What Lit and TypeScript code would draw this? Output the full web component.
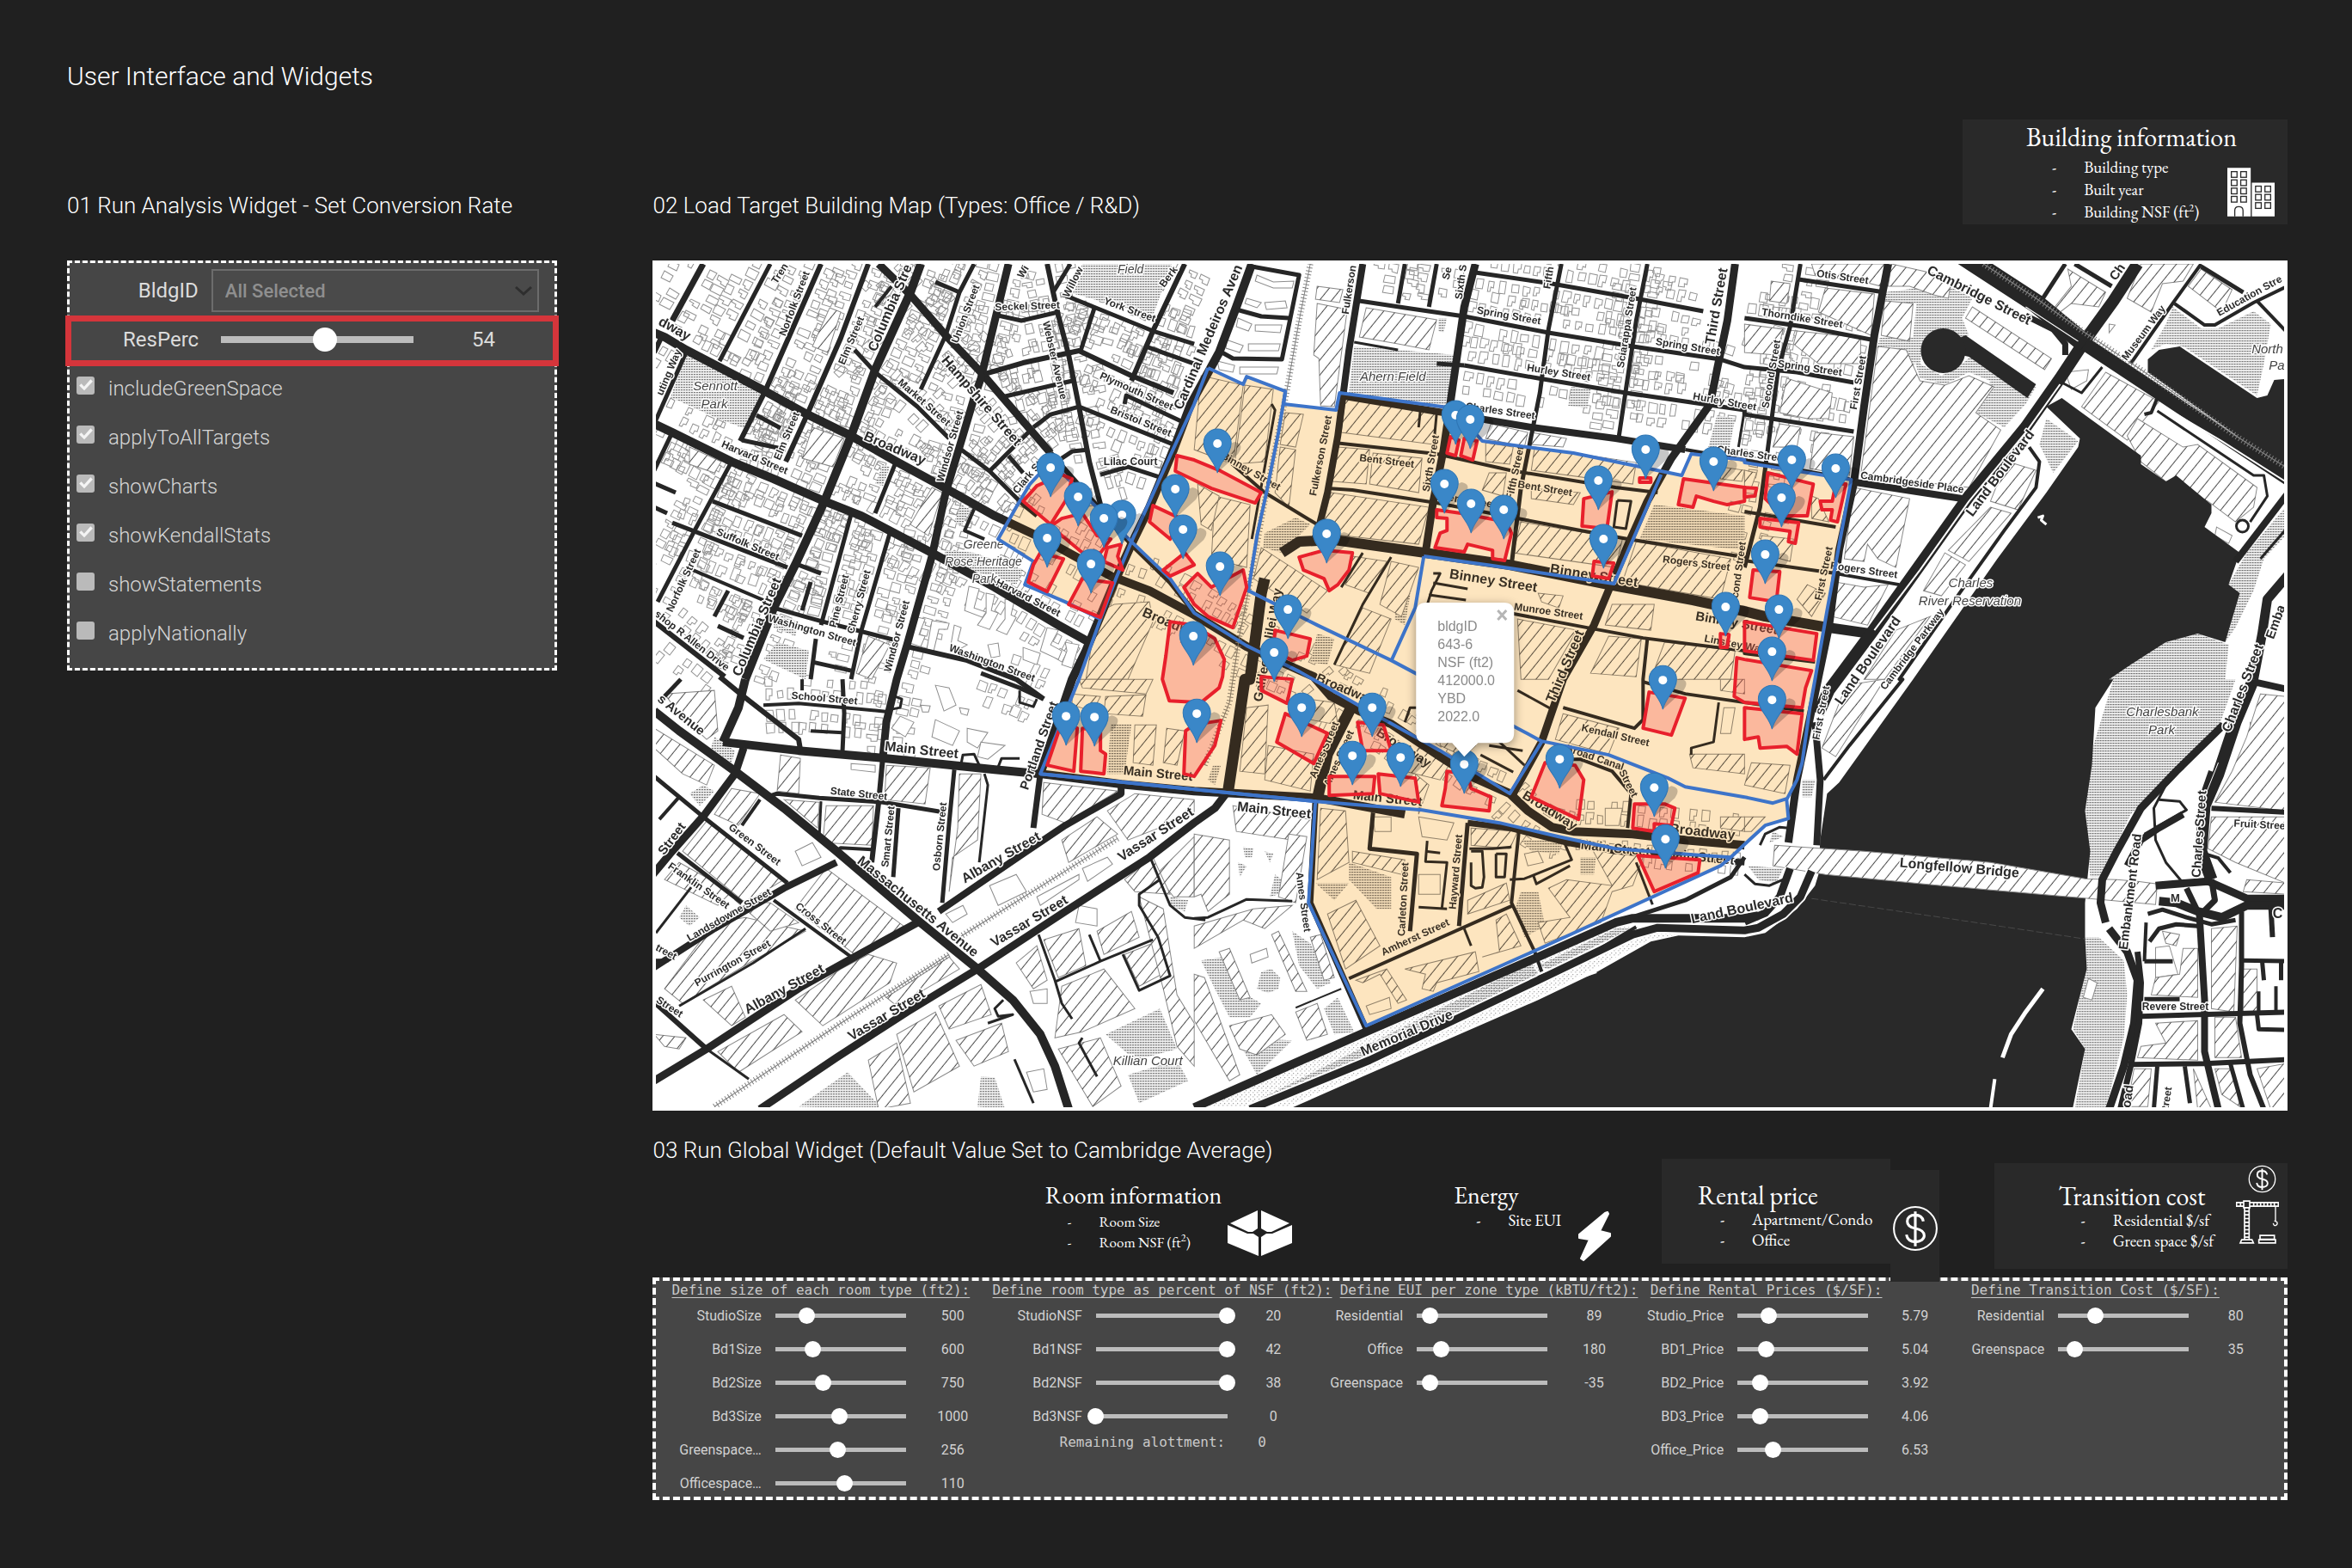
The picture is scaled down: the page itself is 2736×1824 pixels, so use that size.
import { LitElement, html, svg, css } from "lit";
import { customElement, property } from "lit/decorators.js";

/* ---------- map data ----------
   The survey is stored in six sheets. A letter in a point list selects the
   sheet that the points after it belong to. */
const SHEETS: Record<string, [number, number]> = {
  A: [-10, -13], B: [630, -13], C: [1270, -13],
  D: [-10, 487], E: [630, 487], F: [1270, 487],
};
const SX = 2.45;
const SY = 3;

type Pt = [number, number];

function pts(src: string): Pt[] {
  let o = SHEETS.A;
  const out: Pt[] = [];
  for (const t of src.split(" ")) {
    if (SHEETS[t]) { o = SHEETS[t]; continue; }
    const [x, y] = t.split(",").map(Number);
    out.push([Math.round(o[0] + x / SX), Math.round(o[1] + y / SY)]);
  }
  return out;
}
const line = (src: string) => "M" + pts(src).map((p) => p.join(" ")).join("L");
const area = (src: string) => line(src) + "Z";

/* width, points, 1 when houses stand along it */
const ROADS: [number, string, number?][] = [
  [10, "A 30,290 60,305 120,350 345,495 465,575 590,650 720,740 860,835 1000,930 1140,1010 1330,1140 1440,1190 1568,1275 B 150,1385 340,1490 E 390,60 470,110 560,155 700,270 790,340 900,400 950,460 1020,515 1080,530 1250,540 1400,560 1568,580", 1],
  [9, "A 670,50 760,160 860,300 960,430 1080,600 1160,710", 1],
  [6, "A 1160,710 1280,880 1390,1030 1500,1160 1568,1265"],
  [10, "A 790,50 760,150 660,420 590,650 515,880 430,1100 370,1250 290,1500", 1],
  [10, "A 290,1500 D 270,100 225,220"],
  [9, "D 285,240 260,330 175,470 80,600 20,690"],
  [9, "A 1040,50 1010,200 960,450 940,520 900,690 860,850 820,1070 750,1380 720,1500 D 690,150 680,270", 1],
  [6, "D 680,270 670,430 650,640"],
  [6, "A 1150,50 1165,150 1180,230 1210,370 1240,550 1270,740 1300,890", 1],
  [10, "A 30,610 80,640 250,740 370,800 515,880 620,930 820,1060 1000,1180 1180,1310 1270,1370", 1],
  [10, "B 165,50 120,200 70,360 -10,540 A 1510,700 1440,900 1390,1030 1345,1150 1260,1400 1220,1500 D 1130,330"],
  [7, "D 1130,330 1110,520"],
  [10, "D 225,220 440,250 690,275 1000,315 1130,330 1360,365 1568,390 E 350,415 600,470"],
  [7, "E 780,500 900,520 1060,570 1200,600 1568,640"],
  [10, "D 30,110 100,180 260,320 400,450 550,600 780,840 950,1010 1050,1120 1130,1240 1170,1350 1210,1500"],
  [8, "D 1360,370 1360,400 1200,510 1080,610 840,810"],
  [9, "D 780,850 600,970 450,1070 180,1290 30,1400"],
  [9, "E 90,400 60,450 0,500 D 1440,620 1200,810 950,1010 750,1160 550,1320 330,1500"],
  [8, "D 550,640 400,730 200,870 30,1005"],
  [5, "D 30,340 170,480 410,710"], [5, "D 95,605 280,780"], [4, "D 370,770 590,970"],
  [6, "D 20,1115 180,1290"], [3, "D 180,1290 300,1395"],
  [3, "D 460,870 310,990 100,1140"], [5, "D 350,410 380,400 500,415 680,430 860,465"],
  [5, "D 885,315 870,500 850,780"], [5, "D 725,450 710,690"], [3, "D 970,330 980,370 955,640"],
  [4, "D 550,600 560,588 650,595"], [4, "D 330,420 280,510"], [3, "D 505,425 500,550"],
  [4, "D 340,90 440,85 700,115", 1], [5, "D 565,0 570,120 565,250"], [4, "D 475,180 565,185"],
  [6, "D 215,-10 285,60 440,210 445,245"], [4, "D 450,0 450,40"], [4, "D 30,980 70,980"],
  [3, "D 135,725 35,885"], [4, "D 100,410 45,490"], [5, "D 105,0 60,60"],
  [3, "D 1125,890 1170,1050 1190,1130 1220,1185"], [3, "D 1170,1055 1300,985 1450,910"],
  [3, "D 1300,985 1270,890"], [3, "D 1365,960 1410,1085 1500,1035 1465,900 1410,790 1410,750 1470,700"],
  [3, "D 1445,630 1500,790 1540,830 1600,840"], [3, "D 1055,1325 1110,1480"],
  [3, "D 1250,1250 1240,1270 1290,1385"], [3, "D 1025,1120 1000,1150 1010,1175 1050,1170 980,1200"],
  [5, "D 960,-20 1070,30 1140,70", 1],
  [3, "D 715,60 735,70 730,100 705,105"], [3, "D 1070,40 1070,80 1110,95 1120,70"],
  [3, "D 905,295 910,265 940,262 955,300"], [3, "D 1010,305 1020,275 1070,275"],
  [7, "A 170,50 80,250", 1], [5, "A 360,50 215,390", 1], [6, "A 505,50 345,495 275,670", 1],
  [6, "A 640,50 560,310 465,575 405,740", 1], [5, "A 940,50 900,150 860,300 790,490", 1],
  [5, "A 830,115 900,150", 1], [5, "A 600,350 660,430 780,550 870,660", 1],
  [5, "A 905,700 985,775 1080,890 1120,930", 1], [5, "A 985,775 1095,640", 1],
  [5, "A 1040,720 1080,780"], [5, "A 1215,50 1165,150"], [5, "A 1190,155 1450,285 1568,330", 1],
  [5, "A 1010,230 1075,250 1180,220", 1], [6, "A 970,435 1080,395 1240,355 1390,440 1510,500", 1],
  [5, "A 1020,515 1220,460", 1], [5, "A 1110,620 1160,575 1240,550 1510,680", 1],
  [5, "A 1285,205 1245,355", 1], [6, "A 1540,50 1450,285 1390,460", 1], [5, "A 1430,340 1568,400", 1],
  [5, "A 1190,730 1220,705 1270,700"], [5, "A 1300,785 1380,760 1470,795", 1],
  [5, "A 1370,540 1375,510 1540,605", 1], [6, "A 50,310 30,360"], [5, "A 120,360 30,610"],
  [5, "A 320,580 390,625", 1], [5, "A 280,665 405,700", 1], [5, "A 80,640 30,770", 1],
  [5, "A 250,740 145,980 40,1230", 1], [5, "A 195,880 450,1000", 1], [5, "A 80,955 145,985 410,1110", 1],
  [4, "A 140,1120 340,1225", 1], [5, "A 240,1190 200,1280", 1], [5, "A 210,1315 285,1355", 1],
  [5, "A 715,750 660,920", 1], [5, "A 590,925 505,1310", 1], [5, "A 700,990 620,1330 590,1500", 1],
  [5, "A 440,1100 505,1130"], [5, "A 475,1160 450,1260", 1], [5, "A 370,1250 510,1300 720,1365"],
  [6, "A 750,1385 920,1435 1060,1500 D 1140,70"], [4, "A 940,905 915,980 970,1010"],
  [5, "A 490,1360 475,1500"], [5, "A 480,1440 590,1470"], [6, "A 30,1300 230,1490", 1],
  [5, "A 30,815 90,850"], [5, "A 30,900 65,920"], [4, "A 660,200 705,130"],
  [8, "B 480,50 440,350 410,650 380,850 355,970 340,1020"],
  [12, "B 250,1060 300,1020 400,1015 660,1060 900,1100 1180,1170 1420,1225 1568,1262 C 60,1280 240,1320 360,1340"],
  [13, "B 200,1150 190,1200 160,1500 E 145,0 95,400"],
  [13, "E 450,90 380,260 350,420"], [7, "E 345,420 330,780 490,1220"],
  [4, "B 80,720 200,850 350,960"],
  [9, "B 800,50 770,200 740,450 710,700 680,880 660,1060"],
  [5, "B 1045,50 1010,280 985,500 960,650 930,830 905,1100"],
  [5, "B 1290,50 1260,250 1210,650", 1],
  [9, "B 1540,50 1520,250 1490,420 1470,540 1360,730 1290,880 1240,1020 1190,1160 1140,1310 1050,1500 E 990,220 910,400"],
  [5, "C 160,50 130,270 95,420 65,700 45,900 0,1110", 1],
  [9, "C 410,50 370,300 340,550 310,820 270,1050 240,1320 200,1550 F 150,350 125,570"],
  [8, "B 415,510 740,575 960,620 1200,660 1400,700"], [4, "B 1400,700 1568,735 C 300,800"],
  [8, "C 300,810 620,870"],
  [5, "B 800,80 1020,120 1270,175 1450,215", 1], [5, "C 0,240 170,270 360,315", 1],
  [5, "B 470,180 600,205 770,235"], [5, "B 770,235 1010,290 1250,340 1500,385 C 0,410 150,430 310,465", 1],
  [5, "B 690,400 770,405"], [5, "B 770,405 980,450 1230,500 1568,560 C 0,575 310,635", 1],
  [5, "C 155,105 400,150"], [5, "B 600,50 580,190", 1], [5, "B 690,50 670,200", 1],
  [4, "B 400,675 690,715 900,770 1200,830 1320,850"], [4, "C 0,915 260,970"],
  [4, "B 380,835 450,840 690,885 920,940 1100,980 1250,1015 1568,1075 C 0,1085 260,1130 440,1170"],
  [4, "B 900,1270 1120,1320 1280,1355 1568,1400 C 0,1410 200,1440"],
  [4, "E 1280,10 1400,50 1568,80 F 0,80 170,110"], [4, "B 1290,1360 1280,1500 E 1280,140 1255,170 1050,100"],
  [3, "B 645,560 640,620"], [3, "B 690,570 680,700"], [3, "B 220,540 230,560 165,1010"],
  [5, "B 165,60 300,90 250,385 110,380 65,350"], [5, "B 120,210 190,235 270,240"],
  [3, "B 455,325 580,350"], [3, "B 1205,875 1245,880 1230,975 1195,970 1205,875"],
  [3, "B 680,1130 700,1130 675,1190 660,1260"], [3, "B 680,1165 780,1185"], [3, "B 670,1205 775,1225"],
  [3, "B 480,1060 420,1180"], [3, "B 560,1075 480,1240 400,1450"], [3, "B 1568,560 1550,690"],
  [4, "E 925,520 905,780 970,950 990,1020"], [4, "E 440,1045 910,790"], [5, "E 780,500 755,860"],
  [5, "E 510,465 500,590 635,610 615,880"], [3, "E 0,835 40,830 150,768 280,775"], [2, "E 290,1145 420,1080"],
  [3, "E 785,590 850,590 905,585"], [3, "E 790,600 820,600 825,690 820,725 800,730 790,720 790,640"],
  [3, "E 860,610 890,610 885,690 860,690 860,610"], [3, "E 900,700 940,695 1075,630 1050,560"],
  [3, "E 1070,650 975,715 965,680"], [3, "E 770,870 790,930"], [3, "E 665,565 660,635 720,640 705,800"],
  [3, "E 660,600 700,605"], [3, "E 640,795 720,800"],
  [4, "E 1040,280 1100,280 1190,320 1245,400 1235,520"], [3, "E 1260,640 1305,785"],
  [3, "E 840,230 935,250"], [3, "E 815,265 910,325"], [3, "E 870,220 940,300"],
  [3, "E 1495,80 1480,220 1415,240 1415,265"], [3, "E 920,40 1020,105"], [3, "E 600,150 615,100 635,100"],
  [10, "E 0,1495 490,1230 980,970 1200,850 1250,835 1568,835 F 40,825"],
  [9, "E 160,1500 500,1330 980,1050 1250,890 1320,868 1568,875 F 40,868 110,820 160,760 190,670"],
  [9, "F 0,845 60,815 100,760 130,660"], [8, "F 200,150 215,350 205,580"],
  [4, "E 980,1040 1100,980 1260,865"], [5, "E 1200,850 1400,770 1530,690 1568,620"],
  [3, "F 45,580 60,540 100,515 125,520"], [3, "F 0,680 30,715 70,720 110,700"],
  [14, "C 1120,50 1050,180 980,300 900,450 800,620 640,860 500,1100 360,1340 240,1540 F 210,120"],
  [22, "C 620,20 830,190 970,330"], [16, "C 970,330 1180,500 1560,810"],
  [7, "C 800,230 880,280 915,330 915,370"],
  [5, "C 915,50 840,190"], [5, "C 940,50 1045,130"], [4, "C 1300,50 1225,180 1100,400"],
  [5, "C 1300,60 1420,150"], [4, "C 1225,190 1310,265 1340,265 1450,185 1560,120"], [4, "C 1460,180 1560,310"],
  [4, "C 810,690 840,740 830,830 740,980 600,1220 440,1500 F 450,0 300,230 225,350"],
  [3, "C 1020,410 960,500 905,465"], [4, "C 1175,520 1160,570 1140,575"], [3, "C 1175,565 1450,790 1480,790 1490,860 1440,950"],
  [8, "C 1560,830 1400,1090"], [11, "C 1560,1120 1490,1220 1475,1340 1450,1500"], [3, "C 1560,950 1470,1080"],
  [9, "F 1365,160 1230,320 1130,450 1060,600 1020,700 1015,780 1030,850"],
  [9, "F 1040,870 1090,950 1120,1050 1110,1200 1080,1350 1040,1500"],
  [7, "F 1120,950 1130,1060 1125,1200 1100,1350 1070,1500"],
  [14, "F 1450,0 1400,150 1350,330 1310,440 1300,600 1330,700"], [7, "F 1330,320 1310,390"],
  [3, "F 1350,180 1200,370 1165,450 1170,560 1200,640 1250,710"], [3, "F 1180,420 1240,425 1260,455 1140,540"],
  [8, "F 1250,470 1180,520 1130,560 1090,650"], [6, "F 1330,450 1560,465"],
  [9, "F 1170,720 1320,705 1430,765 1560,765"], [10, "F 1180,775 1230,780 1290,810 1360,830 1430,790 1560,790"],
  [7, "F 1260,730 1290,810"], [7, "F 1330,700 1340,770 1300,820"], [5, "F 1150,820 1190,805 1260,830 1330,855 1400,840"],
  [5, "F 1155,915 1180,870 1230,855 1290,860"], [8, "F 1295,820 1310,1120 1310,1300 1330,1400 1350,1500"],
  [6, "F 1415,810 1415,1000 1410,1200 1440,1380 1480,1500"], [6, "F 1130,1175 1560,1160"],
  [6, "F 1100,1345 1310,1340 1560,1325"], [5, "F 1140,985 1220,985"], [4, "F 1145,850 1140,985"],
  [5, "F 1140,1115 1240,1115"], [4, "F 1310,610 1350,625 1385,675"], [5, "F 1415,980 1560,985"],
  [6, "F 1500,790 1505,900"], [5, "F 1475,985 1480,1050"], [5, "F 1530,985 1530,1050"],
  [5, "F 1460,1170 1465,1220 1560,1225"], [5, "F 1175,1350 1165,1500"], [5, "F 1255,1350 1270,1480"],
  [5, "F 1385,1340 1420,1500"], [8, "F 1450,10 1560,40"], [4, "F 1465,1090 1465,1160"], [4, "F 1515,1070 1515,1160"],
];

const RAILS = [
  "D 900,900 1350,555", "D 200,1490 560,1200 870,960", "B 330,50 300,250 265,490 200,880 155,1190 130,1340 110,1500 E 100,80 30,300",
  "C 680,50 830,170 970,290 1130,420 1400,650 1540,760",
];

const WATER = [
  "C 860,550 905,520 950,560 1130,720 1130,750 1200,810 1230,790 1330,890 1330,920 1310,970 1410,1060 1380,1170 1410,1200 1370,1370 1290,1340 1200,1370 1100,1450 1040,1500 F 1050,0 1000,100 990,300 970,460 985,600 970,780 970,900 975,1010 930,1220 970,1290 930,1520 E 230,1520 480,1385 980,1120 1150,1020 1300,915 1380,895 1568,900 F 60,885 150,800 200,720 210,680 215,560 235,400 270,360 480,0 C 480,1500 720,1080 860,850 950,690 955,660",
  "C 630,300 830,470 805,520 640,375 590,360 590,320",
  "C 1150,430 1150,385 1180,350 1240,338 1460,520 1490,510 1510,455 1560,450 1560,790",
];

const PARKS = [
  "A 120,365 345,500 285,625 210,590 75,515", "A 1250,50 1505,50 1450,230 1210,150", "A 680,750 700,760 680,825 660,820",
  "A 905,890 930,910 905,965 885,950", "A 860,1050 940,1060 1080,1120 1060,1170 930,1120 850,1090",
  "A 380,1370 470,1400 460,1500 340,1430", "A 370,1270 440,1300 430,1350 370,1320",
  "B 455,340 580,350 745,370 735,560 440,500", "B 695,240 720,240 710,290 695,285", "B 1075,480 1130,490 1120,555 1065,545",
  "B 1490,580 1540,590 1525,700 1465,690", "B 1310,890 1568,930 1568,1050 1270,1010", "B 290,935 330,960 250,1060 195,1040 200,990",
  "B 350,1340 400,1360 380,1450 330,1440", "B 600,1100 630,1110 600,1310 570,1290",
  "C 400,150 590,120 650,170 620,240 640,300 590,320 500,320 480,420 420,340 380,340 385,310 480,310 490,190 400,180",
  "C 470,330 510,320 500,400 560,440 620,400 650,370 690,410 830,480 800,540 740,620 660,570 700,460 640,430 570,470 500,450",
  "C 860,590 950,670 880,780 840,680", "C 1220,200 1300,275 1350,275 1450,215 1500,260 1480,400 1460,510 1250,340 1200,330 1160,350 1200,260",
  "C 1540,900 1540,1000 1480,1080 1450,1190 1400,1320 1370,1370 1410,1200 1380,1170 1430,1060",
  "C 1040,1500 1100,1440 1200,1370 1290,1340 1380,1380 1370,1500", "F 1050,0 1400,0 1350,170 1200,350 1100,470 1050,600 1020,690 985,690 970,460 990,250",
  "F 970,900 1010,900 1080,980 1090,1100 1080,1250 1030,1500 940,1500 970,1290 935,1220 970,1020",
  "D 1315,1240 1470,1150 1520,1290 1400,1330", "D 1380,1380 1520,1330 1550,1400 1410,1480", "D 440,1490 580,1370 680,1500",
  "D 960,1385 1000,1390 1030,1500 950,1490", "D 200,200 260,250 250,290 190,240", "D 130,400 170,370 200,390 160,440",
  "D 1330,155 1390,155 1370,330 1320,330", "D 120,790 160,830 130,860 100,830", "D 300,840 370,880 320,910", "D 1500,760 1550,770 1540,810 1500,790",
  "E 345,710 440,710 400,770", "E 440,640 560,690 560,800 520,800 440,700", "E 930,560 1050,560 1040,610 960,600",
  "E 930,740 980,740 1000,860 940,900 915,800", "E 20,980 80,970 120,1080 190,1130 160,1180 100,1180 60,1080",
  "E 370,1150 410,1110 455,1230 400,1240", "E 280,880 330,920 390,1060 350,1080 300,1000", "E 120,1250 280,1260 180,1380",
  "E 190,1020 220,1010 245,1040 240,1080 210,1095 180,1080",
  "E 140,585 170,590 165,620 145,620", "E 200,600 225,610 215,640", "E 125,640 150,650 130,690", "E 230,680 250,700 240,750 215,760",
  "E 980,1000 1200,870 1240,870 1100,960 1010,1010", "E 180,1470 960,990 980,1030 260,1450", "E 55,300 75,300 60,370 40,350",
  "E 1100,620 1145,620 1140,680 1100,680", "F 10,650 110,660 90,710 40,700", "F 165,350 200,350 190,410 165,410", "F 80,530 110,550 70,570",
];

const BLOCKS = [
  "A 530,205 560,220 525,360 480,340", "A 480,620 570,660 540,760 450,730", "A 820,830 850,850 810,1000 760,960", "A 130,690 220,740 200,780 130,750",
  "A 640,1350 700,1380 650,1500 605,1480", "A 1290,1270 1340,1240 1440,1230 1450,1300 1380,1500 1260,1500",
  "B 350,190 435,210 400,550 360,545 355,380 340,370", "B 350,130 425,140 415,185 345,175", "B 490,205 690,245 670,350 580,330 470,305",
  "B 20,440 140,475 110,750 0,700", "B 145,475 225,490 200,740 115,750", "B 430,520 690,570 680,680 420,640", "B 410,690 500,700 490,820 395,810",
  "B 510,710 650,730 640,850 500,820", "B 390,850 670,900 640,1030 360,990", "B 260,570 310,575 290,690 245,680", "B 245,690 290,700 270,900 230,850",
  "B 830,675 910,690 900,750 830,740", "B 970,690 1260,745 1250,820 960,770", "B 840,780 890,780 880,860 820,840", "B 960,835 1100,850 1080,890 960,870",
  "B 930,950 1220,1010 1200,1110 910,1060", "B 1260,1020 1530,1080 1500,1220 1220,1160", "B 60,860 160,890 150,1110 50,1080",
  "B 10,820 70,860 50,980 20,960", "B 190,1040 380,1190 320,1270 170,1150", "B 450,1070 550,1090 500,1200 430,1170", "B 560,1090 640,1110 590,1280 530,1240",
  "B 1190,1240 1310,1240 1300,1330 1170,1310", "B 1180,1350 1275,1360 1260,1490 1130,1480", "B 920,1290 1090,1330 1010,1500 930,1500",
  "B 980,1200 1050,1210 1040,1250 990,1230", "B 1340,1370 1540,1400 1530,1500 1300,1500", "B 845,610 950,640 940,690 830,660", "B 1500,760 1568,770 1560,810 1500,800",
  "B 480,1250 560,1290 500,1480 400,1450", "B 960,640 1060,660 1050,690 960,680",
  "C 230,135 370,155 360,300 210,220", "C 150,285 330,310 330,400 210,400 140,330", "C 120,450 250,500 240,590 180,590 100,570", "C 0,260 110,280 90,370 0,360",
  "C 75,110 130,120 120,190 70,180", "C 200,640 310,655 300,790 185,765", "C 100,610 160,620 150,690 80,690", "C 190,50 400,50 390,130 330,110 200,90",
  "C 420,50 590,100 580,170 540,160 470,130 410,130", "C 400,180 480,190 470,320 390,300",
  "C 380,340 460,350 500,460 570,475 640,440 710,480 660,570 730,630 640,830 330,790", "C 650,200 875,380 855,420 630,240",
  "C 920,70 1030,150 1010,200 930,190 900,220 885,200 930,130", "C 1130,50 1280,50 1250,110 1190,120 1160,220 1090,170", "C 1300,70 1390,140 1360,220 1265,130",
  "C 1030,430 1180,530 1090,665 960,550", "C 1120,590 1210,660 1250,690 1290,680 1460,830 1450,900 1400,950 1320,880 1200,810 1130,740 1090,650",
  "C 310,830 470,870 430,1110 380,1080 350,1030 340,1090 285,1080", "C 750,740 830,770 780,910 700,880 720,820",
  "C 700,900 760,920 640,1090 580,1050", "C 570,1060 630,1100 560,1210 510,1190", "C 340,1180 410,1170 350,1310 250,1280 260,1160",
  "C 430,1330 530,1280 400,1500 340,1500", "C 0,770 35,780 20,830 0,830", "C 190,860 210,870 240,950 190,940",
  "C 50,1000 140,1010 130,1090 40,1060", "C 180,1170 230,1200 190,1280 150,1220",
  "F 290,20 400,0 260,270 220,240", "F 20,290 130,300 115,400 0,370", "F 0,480 60,480 20,530 0,530",
  "F 1470,50 1540,60 1540,460 1340,430 1390,320 1430,200", "F 1330,480 1560,480 1540,710 1400,640 1320,590", "F 1430,700 1540,710 1540,750 1420,740",
  "F 1250,940 1290,940 1290,1110 1160,1100 1170,1040 1240,1030", "F 1330,870 1405,860 1395,1160 1330,1150", "F 1170,1200 1290,1190 1290,1330 1120,1320 1130,1280 1200,1270",
  "F 1340,1180 1400,1180 1415,1320 1340,1320", "F 1110,1360 1160,1360 1150,1490 1090,1490", "F 1280,1360 1330,1500 1290,1500", "F 1460,1360 1540,1340 1540,1500 1500,1500",
  "F 1420,1010 1460,1010 1460,1160 1420,1160", "F 1190,880 1240,890 1230,930 1200,920", "F 1340,1360 1390,1360 1410,1490 1360,1450",
  "D 60,50 200,40 210,180 180,210 100,120", "D 390,265 445,275 440,400 380,390", "D 690,300 815,310 800,435 685,420", "D 900,330 960,330 950,560 880,620 870,740 895,520",
  "D 400,420 500,430 495,520", "D 520,440 655,440 650,580 510,570", "D 1140,360 1350,390 1200,500 1135,470", "D 1190,560 1290,480 1350,540 1210,640",
  "D 1320,460 1400,400 1568,420 1568,470 1380,560", "D 1460,680 1568,550 1568,760 1510,760", "D 250,380 330,400 270,510 200,470", "D 180,495 400,700 290,780 110,600",
  "D 100,640 250,740 210,790 60,700", "D 520,660 740,860 600,960 430,800", "D 200,850 290,830 460,880 300,990 110,1130 60,1080",
  "D 640,960 720,990 700,1060 510,1210 430,1120 560,1010", "D 400,1170 450,1230 270,1370 210,1300", "D 170,1120 250,1070 290,1180 250,1210",
  "D 30,1240 120,1250 100,1290 60,1280", "D 720,1240 830,1160 900,1350 770,1440", "D 640,1330 720,1270 760,1480 670,1500", "D 840,1140 960,1065 990,1170 870,1220",
  "D 890,1260 1020,1200 1040,1300 940,1350", "D 870,970 900,1010 720,1140 690,1110", "D 1060,990 1120,930 1150,1050 1110,1080",
  "D 1140,910 1240,870 1260,1000 1180,1040", "D 1290,880 1390,810 1410,900 1310,960", "D 1190,1070 1310,1010 1400,1150 1250,1230 1170,1250",
  "D 1370,960 1450,920 1490,1020 1410,1070", "D 1410,760 1480,800 1520,1100 1568,1200 1568,1350 1520,1280 1480,1080", "D 1180,1290 1300,1250 1360,1420 1280,1490",
  "D 30,170 200,300 180,370 110,330 30,240", "D 260,770 360,780 440,850 360,880", "D 1370,700 1450,620 1500,750 1400,740",
  "D 1315,60 1430,55 1420,130 1310,120", "D 1240,0 1450,0 1430,50 1250,30", "D 1400,160 1460,160 1450,300 1395,290", "D 1490,170 1540,180 1520,300 1480,290",
  "D 1220,50 1300,60 1280,110 1220,90",
  "E 150,100 210,90 200,330 130,320", "E 210,230 340,260 330,390 200,350", "E 110,440 330,490 280,560 120,530", "E 0,540 100,560 100,750 40,810 20,750 0,760",
  "E 270,540 320,550 290,780 240,760", "E 380,820 460,770 530,930 430,1010", "E 360,450 430,460 440,640 350,700", "E 450,600 600,630 590,680 450,640",
  "E 630,330 670,370 640,470 640,400", "E 640,240 740,270 700,350 600,320", "E 790,520 920,530 900,590 790,580", "E 780,770 890,710 900,770 780,820",
  "E 600,1010 800,950 810,1020 690,1060 680,1090 650,1080 660,1030", "E 550,1010 605,1120 580,1130 530,1030 480,1060 460,1050", "E 820,970 930,930 890,820 860,840 870,950",
  "E 1120,560 1280,620 1250,720 1190,740 1160,850 1000,920 980,850 1070,830 1010,730 1060,700 1190,720", "E 1050,120 1210,170 1180,260 1030,210",
  "E 1410,260 1568,260 1568,330 1420,310", "E 1500,480 1568,480 1568,530 1500,520", "E 70,950 100,940 160,1110 130,1120", "E 220,890 240,880 320,1090 290,1090",
  "E 330,900 360,890 400,1040 370,1050", "E 100,1210 220,1170 260,1240 180,1310 130,1290", "E 290,1160 350,1130 380,1240 320,1260", "E 170,800 280,790 200,870 140,840 0,940 0,860",
  "E 0,1030 30,1040 130,1380 100,1400 0,1190", "E 320,70 400,80 410,160 330,140", "E 700,190 800,230 770,270 700,230", "E 1500,0 1568,0 1568,50 1500,40",
];

/* Apartment courts and single lots, drawn as bare outlines. */
const COURTS = [
  "A 925,1175 955,1185 940,1250 975,1265 965,1285 915,1260", "A 975,1200 1000,1205 990,1260 1010,1270 985,1325 950,1310 975,1270",
  "A 1030,1220 1055,1225 1045,1275 1060,1285 1035,1345 1005,1330 1030,1290", "A 770,1280 800,1290 785,1345 800,1350 790,1385 760,1375",
  "A 820,1295 870,1305 865,1325 840,1325 825,1400 805,1395", "A 885,1310 905,1320 895,1365 920,1380 900,1395 875,1380",
  "A 1150,1320 1180,1330 1160,1380 1190,1400 1180,1430 1130,1400", "A 1200,1370 1240,1380 1220,1460 1190,1450 1205,1400",
  "A 980,1380 1010,1375 1015,1420 990,1425", "A 1080,1390 1130,1410 1120,1450 1080,1430",
  "B 180,90 225,115 285,110 280,135 225,135 175,110", "B 150,170 190,185 180,205 145,190", "B 200,185 260,180 265,205 205,210",
  "B 125,240 165,260 155,285 120,270", "B 175,265 250,265 245,290 175,285", "B 90,315 140,335 130,360 90,345", "B 155,330 245,330 240,355 155,355",
  "B 65,390 115,405 110,430 70,420", "B 130,410 240,410 235,435 130,435", "D 730,130 770,150 745,200 705,170", "D 830,140 900,180 880,230 820,200",
  "D 920,170 980,185 950,240 920,220", "D 960,220 1030,230 980,280 950,270", "D 790,90 815,92 810,115 795,115", "D 900,100 925,105 920,125 905,120",
  "D 830,20 870,30 890,90 855,110", "D 590,295 660,300 660,325 590,315", "D 985,720 1060,680 1090,740 1010,790", "D 1250,660 1320,620 1335,645 1265,705",
  "D 1120,760 1240,680 1240,700 1130,790", "D 430,600 480,570 505,620 450,650", "D 860,820 910,790 920,820 880,850", "D 1240,790 1290,800 1290,860 1230,850",
  "D 1100,1090 1150,1080 1150,1130 1110,1130", "D 1090,1370 1140,1360 1150,1430 1110,1440", "E 640,480 740,500 720,560 650,550", "E 640,680 700,680 700,750 640,750",
  "E 1170,450 1220,450 1210,510 1170,510", "E 490,1140 555,1110 560,1150 500,1170", "E 160,960 205,940 210,970 165,990", "E 510,480 560,480 560,530 515,530",
  "E 940,610 980,600 995,640 950,650", "E 1510,100 1540,100 1530,190 1500,190", "C 915,430 980,420 975,460 930,490", "C 1040,260 1055,265 1040,290", "C 1345,970 1390,1000 1380,1025 1340,1000",
  "F 1440,150 1520,160 1510,200 1440,190", "F 1170,935 1210,930 1235,1030 1170,1040", "F 980,1045 1005,1060 990,1120 965,1110",
];

const BRIDGE = "F 85,580 340,600 560,625 700,640 970,695 1060,700 1120,705 1175,715 1170,785 1040,770 700,735 560,720 230,680 80,650";

const SITE =
  "B 40,415 140,470 150,445 260,495 255,540 405,560 415,500 740,555 820,670 1080,710 1390,790 1415,715 1568,735 C 0,745 305,805 235,1260 200,1500 F 185,100 165,290 150,350 120,420 125,485 60,510 0,575 E 1530,620 1500,650 980,942 490,1210 325,780 345,425 0,385 D 1130,330 1240,0 A 1300,1290 1200,1230 1085,1170 1110,1090 1010,1010 1060,900 1100,820 1160,740 1390,1020 1500,720 1568,540";

const BOUNDS = [
  SITE + " B 40,415", "B 260,495 240,640 205,850 180,1000 155,1190 350,1310 560,1435 640,1485 E 920,170 990,215 1180,265 1350,345 1400,375 1568,410 F 80,432 120,418",
  "B 655,1070 630,1250 560,1438", "B 655,1070 850,1105 1195,1168 1330,785", "A 1390,1020 1500,1150 1568,1268 B 150,1382 300,1472 E 480,100 700,250 900,398 990,220",
  "D 1130,330 1568,385 E 345,425 650,455 870,500 1040,550 1200,590 1420,612 1530,620", "A 1390,1020 1345,1150 1300,1290",
];

const TARGETS = [
  "A 1190,785 1220,800 1200,880 1160,960 1080,880 1120,825", "A 1190,940 1250,920 1290,1000 1330,1010 1300,1060 1250,1060 1160,965",
  "A 1320,1040 1360,1030 1350,1070 1365,1120 1310,1090", "A 1130,1060 1195,1080 1150,1195 1095,1160 1110,1100", "A 1250,1150 1335,1165 1300,1285 1210,1240",
  "B 0,735 70,770 190,850 175,885 50,835 -55,775 -50,720", "A 1450,895 1530,940 1500,1010 1440,950", "A 1540,1060 1568,1100 1500,1140 1480,1120",
  "B 140,1120 150,1180 110,1320 40,1280 0,1240 -30,1180 10,1130 50,1180", "B 300,1075 370,1050 450,1060 440,1120 410,1170 385,1190 370,1150 310,1120",
  "B 730,655 755,665 745,720 720,710", "B 770,660 805,670 795,735 760,720", "B 690,910 760,920 890,950 905,990 885,1085 850,1080 850,1050 780,1030 770,1055 685,1040 700,990 720,980 720,940 690,935",
  "B 1110,870 1190,845 1175,975 1105,965", "B 1270,797 1300,797 1300,812 1270,812", "B 1140,1090 1195,1095 1180,1150 1135,1140",
  "B 1395,800 1568,830 1568,880 1520,890 1480,880 1430,860 1420,900 1380,890", "C 65,780 195,820 180,930 110,930 60,870", "C 215,880 250,880 260,820 290,820 265,950 245,945 250,910 220,910",
  "C 45,940 155,955 145,1025 125,1020 130,985 45,970", "C 25,1120 100,1125 90,1230 15,1215", "C 0,830 35,835 30,860 0,865",
  "C 0,1300 205,1340 195,1435 60,1410 0,1400", "B 1545,1425 1568,1430 C 190,1470 175,1530 F 165,100 0,80 -30,60", "F 0,100 165,120 150,260 120,235 45,240 40,200 0,210",
  "B 1500,1340 1525,1345 1520,1390 1500,1390",
  "B 230,1330 330,1360 320,1420 280,1435 225,1400", "E 190,-10 280,0 265,85 190,40", "A 1500,1300 1568,1310 B 60,1360 85,1430 80,1490 E 70,30 20,80 -70,75 -90,0 B -80,1420",
  "E 0,160 75,145 60,230 0,340 -30,330 -25,180", "E 260,120 380,190 340,295 235,220", "E 465,150 540,160 560,250 480,250",
  "E 385,340 515,340 510,400 385,405", "E 525,330 630,345 640,430 530,400", "E 720,320 780,330 790,380 845,410 840,460 705,440 715,380",
  "E 1000,290 1085,300 1110,350 1095,490 960,410", "E 1295,45 1400,65 1360,195 1280,170", "E 1255,435 1340,435 1370,450 1360,510 1310,505 1310,530 1250,520",
  "E 1265,615 1440,630 1435,675 1310,740", "D 1190,150 1235,170 1225,320 1150,300", "D 1250,170 1300,180 1300,250 1315,260 1310,330 1245,320",
];

const PINS = [
  "A 1160,865", "A 1238,965", "A 1362,1028", "A 1310,1040", "A 1148,1110", "A 1275,1200", "A 1513,940", "A 1537,1080", "B 65,780", "B 744,680", "B 787,695",
  "B 712,920", "B 790,990", "B 882,1010", "B 1287,800", "B 1152,908", "B 1480,843", "B 378,1095", "B 1167,1112", "B 74,1208", "B 268,1358", "B 228,1508", "B 1514,1350",
  "B -3,1452", "C 135,838", "C 260,868", "C 105,968", "C 58,1168", "C 97,1360", "C 79,1506", "F 79,175", "E 7,222", "E 307,202", "E 507,202", "E 1335,105",
  "E 451,370", "E 588,376", "E 770,400", "E 1041,380", "E 1310,480", "E 1343,660", "D 1204,230", "D 1284,235",
];

/* text, size, reading direction from start to end along its middle */
const NAMES: [string, number, string, boolean?][] = [
  ["dway", 16, "A 50,248 125,300"], ["Broadway", 16, "A 635,650 795,735"], ["Harvard Street", 12, "A 230,680 400,768"], ["Norfolk Street", 12, "A 395,290 460,85"],
  ["Tren", 12, "A 375,105 398,62"], ["Elm Street", 12, "A 565,390 615,245"], ["Elm Street", 12, "A 382,720 432,580"], ["Columbia Stre", 16, "A 655,335 748,72"],
  ["Union Street", 12, "A 885,320 945,125"], ["Market Street", 12, "A 735,465 860,600"], ["Hampshire Street", 16, "A 865,390 1060,665"], ["Windsor Street", 12, "A 845,800 900,570"],
  ["Seckel Street", 12, "A 1010,200 1175,195"], ["Webster Avenue", 12, "A 1145,255 1195,520"], ["York Street", 12, "A 1315,180 1450,240"], ["Willow", 12, "A 1205,155 1240,72"],
  ["Wi", 12, "A 1076,85 1084,68"], ["Berk", 12, "A 1480,120 1508,72"], ["Plymouth Street", 12, "A 1305,440 1500,545"], ["Bristol Street", 12, "A 1335,560 1495,640"],
  ["Lilac Court", 12, "A 1318,742 1455,742"], ["Clark St", 12, "A 1065,835 1120,755"], ["Suffolk Street", 12, "A 210,985 380,1070"], ["Norfolk Street", 12, "A 75,1250 150,1055"],
  ["shop R Allen Drive", 12, "A 45,1275 230,1455"], ["Columbia Street", 16, "A 265,1475 375,1155"], ["Washington Street", 12, "A 360,1285 600,1370"], ["Pine Street", 12, "A 540,1305 570,1145"],
  ["Cherry Street", 12, "A 590,1330 635,1130"], ["Windsor Street", 12, "A 695,1465 745,1235"], ["Harvard Street", 12, "A 1010,1160 1180,1265"], ["Washington Street", 12, "A 875,1390 1110,1495"],
  ["Broadway", 16, "A 1425,1265 1590,1350"], ["uting Way", 12, "A 45,500 95,355"], ["Cardinal Medeiros Aven", 16, "A 1530,530 1568,430 B 118,78"],
  ["Sennott", 15, "A 135,475 270,475", true], ["Park", 15, "A 160,537 240,537", true], ["Greene", 14, "A 905,1028 1030,1028", true], ["Rose Heritage", 14, "A 845,1090 1090,1090", true],
  ["Park", 14, "A 930,1150 1010,1150", true], ["Field", 14, "A 1340,70 1430,70", true],
  ["Fulkerson", 12, "B 430,220 450,60"], ["Sixth S", 12, "B 755,155 765,70"], ["Se", 12, "B 718,95 722,72"], ["Fifth", 12, "B 1005,125 1012,70"],
  ["Spring Street", 12, "B 810,212 980,248"], ["Sciarappa Street", 12, "B 1215,400 1250,145"], ["Third Street", 16, "B 1470,320 1505,75"], ["Spring Street", 12, "B 1320,322 1490,355"],
  ["Hurley Street", 12, "B 955,410 1120,445"], ["Charles Street", 12, "B 780,545 965,580"], ["Hurley Street", 12, "B 1430,512 1590,550"], ["Ahern Field", 15, "B 470,440 660,440", true],
  ["Bent Street", 12, "B 475,725 620,748"], ["Fulkerson Street", 12, "B 340,850 380,590"], ["Sixth Street", 12, "B 660,840 685,655"], ["Fifth Street", 12, "B 900,860 925,700"],
  ["Bent Street", 12, "B 925,820 1070,845"], ["Bent Street", 12, "B 700,860 860,890"], ["Binney Street", 12, "B 85,720 235,825"], ["Binney Street", 16, "B 732,1130 970,1175"],
  ["Binney Street", 16, "B 1020,1112 1258,1162"], ["Rogers Street", 12, "B 1340,1080 1520,1108"], ["Munroe Street", 12, "B 915,1245 1105,1278"], ["Second Street", 12, "B 1535,1250 1560,1030"],
  ["Binney Street", 15, "B 1430,1275 1568,1300 C 90,1325"], ["Linskey Way", 12, "B 1465,1360 1568,1375 C 50,1395"], ["Galileo Galilei Way", 15, "E 180,70 B 235,1190"],
  ["Charles Street", 12, "B 1505,700 1568,705 C 100,725"], ["Third Street", 16, "E 1015,70 B 1095,1340"],
  ["Otis Street", 12, "C 210,85 345,108"], ["Thorndike Street", 12, "C 55,218 275,262"], ["Second Street", 12, "C 60,548 90,320"], ["First Street", 12, "C 310,545 335,380"],
  ["Spring Street", 12, "C 100,400 270,430"], ["Cambridge Street", 16, "C 535,75 800,240"], ["Museum Way", 12, "C 1080,380 1190,200"], ["Education Stre", 12, "C 1355,215 1520,105"],
  ["Ch", 15, "C 1052,92 1068,62"], ["North", 15, "C 1448,345 1532,345", true], ["Pa", 15, "C 1502,403 1532,403", true], ["Land Boulevard", 16, "C 640,920 815,635"],
  ["Cambridgeside Place", 12, "C 335,785 620,838"], ["Rogers Street", 12, "C 250,1102 430,1135"], ["First Street", 12, "C 210,1215 240,1045"], ["Charles", 15, "C 578,1162 708,1162", true],
  ["River Reservation", 15, "C 492,1225 790,1225", true], ["Land Boulevard", 16, "F 260,90 C 440,1275"], ["Cambridge Parkway", 12, "F 400,20 C 555,1265"], ["First Street", 12, "F 203,205 230,30"],
  ["Emba", 15, "C 1495,1355 1528,1240"], ["Charles Street", 16, "F 1370,180 C 1465,1380"],
  ["School Street", 12, "D 425,58 605,75"], ["s Avenue", 15, "D 38,55 175,190"], ["Main Street", 16, "D 690,235 890,258"], ["State Street", 12, "D 535,388 688,408"],
  ["Smart Street", 12, "D 685,645 702,450"], ["Osborn Street", 12, "D 832,660 853,435"], ["Portland Street", 15, "D 1082,380 1165,80"], ["Main Street", 15, "D 1362,315 1568,340"],
  ["Albany Street", 16, "D 910,695 1125,545"], ["Vassar Street", 16, "D 1355,620 1560,460"], ["Vassar Street", 16, "D 990,920 1205,765"], ["Massachusetts Avenue", 16, "D 610,625 950,960"],
  ["Green Street", 12, "D 250,515 382,635"], ["Franklin Street", 12, "D 78,650 235,785"], ["Landsdowne Street", 12, "D 130,900 355,740"], ["Purrington Street", 12, "D 150,1060 352,920"],
  ["Cross Street", 12, "D 438,790 568,915"], ["Albany Street", 16, "D 290,1155 510,1005"], ["Vassar Street", 16, "D 580,1250 798,1090"], ["Street", 12, "D 42,1115 105,1168"],
  ["Street", 15, "D 50,600 105,510"], ["treet", 12, "D 38,935 85,965"], ["Killian Court", 15, "D 1338,1328 1533,1328", true],
  ["Main Street", 16, "E 128,440 328,468"], ["Ames Street", 12, "E 298,680 322,870"], ["Ames Street", 12, "E 340,330 400,160"], ["Ames Street", 12, "E 380,360 440,190"],
  ["Broadway", 15, "E 350,-10 510,75"], ["Broadway", 15, "E 525,180 670,290"], ["Main Street", 15, "E 452,400 650,425"], ["Carleton Street", 12, "E 590,885 600,650"],
  ["Hayward Street", 12, "E 735,795 752,550"], ["Amherst Street", 12, "E 540,950 720,850"], ["Kendall Street", 12, "E 1125,175 1275,215"], ["Broad Canal", 12, "E 1075,245 1205,300"],
  ["Street", 12, "E 1220,320 1255,405"], ["Broadway", 15, "E 940,400 1085,510"], ["Broadway", 16, "E 1360,518 1535,540"], ["Main Street", 15, "E 1098,572 1300,600"],
  ["Main Street", 15, "E 1340,605 1540,630"], ["Memorial Drive", 16, "E 475,1300 735,1165"], ["Land Boulevard", 16, "E 1415,835 1568,830 F 135,760"],
  ["Charlesbank", 15, "F 1085,110 1297,110", true], ["Park", 15, "F 1150,173 1228,173", true], ["Fruit Stree", 12, "F 1405,502 1532,510"], ["Charles Street", 15, "F 1285,695 1300,385"],
  ["Longfellow Bridge", 16, "F 440,635 785,675"], ["Embankment Road", 15, "F 1075,950 1070,750 1120,530"], ["Revere Street", 12, "F 1140,1142 1315,1142"], ["oad", 15, "F 1086,1490 1093,1420"],
  ["treet", 12, "F 1197,1490 1205,1430"], ["C", 16, "F 1510,815 1530,815"], ["M", 13, "F 1212,762 1240,762"],
];

const POPUP = ["bldgID", "643-6", "NSF (ft2)", "412000.0", "YBD", "2022.0"];

/* Small lots on both sides of the residential streets. */
function houses(): string {
  let seed = 7;
  const rnd = () => (seed = (seed * 16807) % 2147483647) / 2147483647;
  const out: string[] = [];
  for (const [w, src, lots] of ROADS) {
    if (!lots) continue;
    const p = pts(src);
    for (let i = 1; i < p.length; i++) {
      const dx = p[i][0] - p[i - 1][0];
      const dy = p[i][1] - p[i - 1][1];
      const len = Math.hypot(dx, dy);
      if (!len) continue;
      const ux = dx / len, uy = dy / len;
      for (const side of [-1, 1]) {
        for (const row of [0, 1]) {
          for (let s = 7; s < len - 5; s += 11 + rnd() * 4) {
            if (rnd() < 0.16 + row * 0.3) continue;
            const o = side * (w / 2 + 9 + row * 15 + rnd() * 3);
            const cx = p[i - 1][0] + ux * s - uy * o;
            const cy = p[i - 1][1] + uy * s + ux * o;
            const a = 3 + rnd() * 2, b = 4 + rnd() * 3;
            const at = (m: number, n: number) =>
              `${Math.round(cx + ux * m - uy * n)} ${Math.round(cy + uy * m + ux * n)}`;
            out.push(rnd() < 0.4
              ? `M${at(-a, -b)}L${at(a, -b)}L${at(a, 1)}L${at(a - 3, 1)}L${at(a - 3, b)}L${at(-a, b)}Z`
              : `M${at(-a, -b)}L${at(a, -b)}L${at(a, b)}L${at(-a, b)}Z`);
          }
        }
      }
    }
  }
  return out.join("");
}
const HOUSES = houses();

@customElement("district-map")
class DistrictMap extends LitElement {
  static styles = css`
    :host { display: block; border: 4px solid #fff; background: #fff; }
    svg { display: block; width: 100%; height: auto; isolation: isolate; }
    .house { fill: none; stroke: #929292; stroke-width: 1; }
    .court { fill: #fff; stroke: #8c8c8c; stroke-width: 1; }
    .block { fill: #fff; stroke: #8a8a8a; stroke-width: 1; }
    .ink { fill: none; stroke: #262626; stroke-linejoin: round; }
    .faint { fill: none; stroke: #484848; }
    .rail { fill: none; stroke: #808080; }
    .water { fill: #292929; }
    .case { fill: none; stroke: #fff; stroke-linejoin: round; }
    .name { font-family: "Liberation Sans", Arial, sans-serif; font-weight: 700; fill: #2b2b2b; stroke: #fff; stroke-width: 3px; paint-order: stroke; stroke-linejoin: round; text-anchor: middle; dominant-baseline: central; }
    .place { font-style: italic; font-weight: 400; fill: #444; }
    .site { fill: #fdebca; mix-blend-mode: multiply; }
    .warm { fill: rgba(255, 150, 60, 0.07); }
    .bound { fill: none; stroke: #3d74c9; stroke-width: 4; stroke-linejoin: round; }
    .target { fill: rgba(248, 70, 70, 0.28); stroke: #e8202c; stroke-width: 4; stroke-linejoin: round; }
    .bubble { fill: #fff; filter: drop-shadow(0 3px 6px rgba(0, 0, 0, 0.4)); }
    .note { font-family: "Liberation Sans", Arial, sans-serif; font-size: 16px; fill: #8a8a8a; }
    .close { stroke: #b5b5b5; stroke-width: 3; }
  `;

  private label([text, size, where, place]: [string, number, string, boolean?]) {
    const p = pts(where);
    const a = p[0];
    const b = p[p.length - 1];
    const turn = Math.round((Math.atan2(b[1] - a[1], b[0] - a[0]) * 180) / Math.PI);
    return svg`<text class="name ${place ? "place" : ""}" font-size=${size}
      transform="translate(${Math.round((a[0] + b[0]) / 2)} ${Math.round((a[1] + b[1]) / 2)}) rotate(${turn})">${text}</text>`;
  }

  private pin(where: string) {
    const [x, y] = pts(where)[0];
    return svg`<g transform="translate(${x} ${y})">
      <path d="M0 0L24 -22Q32 -34 20 -36L6 -30Z" fill="#000" opacity="0.22"></path>
      <path d="M0 0C-3 -14 -16 -22 -16 -35A16 16 0 0 1 16 -35C16 -22 3 -14 0 0Z" fill="#3a87c8" stroke="#2f76b5" stroke-width="1"></path>
      <circle cy="-34" r="5" fill="#fff"></circle></g>`;
  }

  render() {
    const hub = pts("C 565,355")[0];
    const loop = pts("C 1418,967")[0];
    return html`<svg viewBox="4 4 1893 981" role="img" aria-label="Target building map">
      <defs>
        <pattern id="hatch" width="11" height="11" patternUnits="userSpaceOnUse" patternTransform="rotate(39)">
          <path d="M5 0V11" stroke="#4a4a4a" stroke-width="1"></path>
        </pattern>
        <pattern id="dots" width="3" height="3" patternUnits="userSpaceOnUse">
          <rect width="3" height="3" fill="#f0f0f0"></rect>
          <rect width="2" height="1" fill="#6a6a6a"></rect>
        </pattern>
        <pattern id="sand" width="5" height="5" patternUnits="userSpaceOnUse">
          <rect width="1" height="1" fill="#777"></rect><rect x="3" y="2" width="1" height="1" fill="#777"></rect>
        </pattern>
      </defs>
      <path class="house" d=${HOUSES}></path>
      ${PARKS.map((d) => svg`<path d=${area(d)} fill="url(#dots)"></path>`)}
      ${COURTS.map((d) => svg`<path class="court" d=${area(d)}></path>`)}
      ${BLOCKS.map((d) => svg`<path class="block" d=${area(d)}></path><path d=${area(d)} fill="url(#hatch)"></path>`)}
      ${WATER.map((d) => svg`<path class="water" d=${area(d)}></path>`)}
      <circle class="water" cx=${hub[0]} cy=${hub[1]} r="26"></circle>
      <path class="case" stroke-width="5" d=${line("F 850,1080 800,1160 760,1240 735,1320")}></path>
      <path class="case" stroke-width="4" d=${line("F 712,1395 700,1500")}></path>
      <path class="case" stroke-width="3" d=${line("C 835,935 850,930 845,945 860,960")}></path>
      <path class="case" stroke-width="8" d=${line("E 1115,1025 1145,1015")}></path>
      <path class="case" stroke-width="8" d=${line("E 375,1425 455,1385")}></path>
      <path class="faint" stroke-width="1" stroke-dasharray="8 3" d=${line("F 190,765 560,830 970,905")}></path>
      <path d=${area("E 0,1500 490,1250 980,985 1200,865 1568,870 1568,895 1380,890 1300,905 980,1110 480,1375 230,1510")} fill="url(#sand)"></path>
      <path class="block" d=${area(BRIDGE)}></path><path d=${area(BRIDGE)} fill="url(#hatch)"></path>
      <path class="case" stroke-width="13" d=${line("E 160,1500 500,1330 980,1050 1250,890 1320,868 1568,875 F 40,868 110,820 160,760 190,670")}></path>
      <path class="case" stroke-width="13" d=${line("F 0,845 60,815 100,760 130,660")}></path>
      ${ROADS.map(([w, d]) => svg`<path class="ink" stroke-width=${w} d=${line(d)}></path>`)}
      <circle class="ink" stroke-width="3" cx=${loop[0]} cy=${loop[1]} r="7"></circle>
      <path class="case" stroke-width="2" d=${line("C 900,470 800,640 640,880 500,1120 370,1330")}></path>
      <path class="case" stroke-width="2" d=${line("C 1180,540 1360,670 1540,810")}></path>
      <path class="case" stroke-width="1" d=${line("C 800,200 950,320")}></path>
      <path class="case" stroke-width="1" d=${line("F 1350,290 1290,470 1290,600")}></path>
      ${RAILS.map((d) => svg`<path class="rail" stroke-width="1" d=${line(d)}></path>
        <path class="rail" stroke-width="7" stroke-dasharray="1 3" d=${line(d)}></path>`)}
      ${NAMES.map((n) => this.label(n))}
      <path class="site" d=${area(SITE)}></path>
      <path class="warm" d=${area(SITE)}></path>
      ${BOUNDS.map((d) => svg`<path class="bound" d=${line(d)}></path>`)}
      ${TARGETS.map((d) => svg`<path class="target" d=${area(d)}></path>`)}
      ${PINS.map((d) => this.pin(d))}
      <path class="bubble" d="M900 398H990Q1002 398 1002 410V549Q1002 561 990 561H960L944 577L930 561H900Q888 561 888 549V410Q888 398 900 398Z"></path>
      <path class="close" d="M983 407L993 418M993 407L983 418"></path>
      ${POPUP.map((t, i) => svg`<text class="note" x="913" y=${431 + i * 21}>${t}</text>`)}
    </svg>`;
  }
}

/* ---------- widgets ---------- */
interface Field { name: string; value: number; min?: number; max: number; }

@customElement("slider-row")
class SliderRow extends LitElement {
  @property({ attribute: false }) field!: Field;
  @property({ type: Boolean, reflect: true }) large = false;

  static styles = css`
    :host { --thumb: 19px; --bar: 5px; display: grid; grid-template-columns: 113fr 153fr 77fr; column-gap: 16px; align-items: center; height: 24px; font-size: 16px; color: #d2d2d2; }
    :host([large]) { --thumb: 28px; --bar: 8px; box-sizing: border-box; grid-template-columns: 148fr 224fr 110fr; column-gap: 26px; height: 45px; padding: 0 26px 4px 0; font-size: 24px; color: #dcdcdc; }
    label { text-align: right; white-space: nowrap; }
    output { text-align: center; }
    input { appearance: none; box-sizing: border-box; width: calc(100% + var(--thumb)); height: var(--thumb); margin: 0 calc(var(--thumb) / -2); outline-offset: 2px;
      background: linear-gradient(#bcbcbc, #bcbcbc) center / calc(100% - var(--thumb)) var(--bar) no-repeat; }
    input::-webkit-slider-thumb { appearance: none; width: var(--thumb); height: var(--thumb); border-radius: 50%; background: #fff; }
  `;

  render() {
    const f = this.field;
    return html`<label for="range">${f.name}</label>
      <input id="range" type="range" step="any" min=${f.min ?? 0} max=${f.max} .value=${String(f.value)} />
      <output for="range">${f.value}</output>`;
  }
}

const ANALYSIS: [string, boolean][] = [
  ["includeGreenSpace", true], ["applyToAllTargets", true], ["showCharts", true],
  ["showKendallStats", true], ["showStatements", false], ["applyNationally", false],
];

const GROUPS: { title: string; inset: string; fields: Field[]; remaining?: number }[] = [
  { title: "Define size of each room type (ft2):", inset: "", fields: [
    { name: "StudioSize", value: 500, max: 2100 }, { name: "Bd1Size", value: 600, max: 2100 }, { name: "Bd2Size", value: 750, max: 2050 },
    { name: "Bd3Size", value: 1000, max: 2040 }, { name: "Greenspace…", value: 256, max: 533 }, { name: "Officespace…", value: 110, max: 207 } ] },
  { title: "Define room type as percent of NSF (ft2):", inset: "", remaining: 0, fields: [
    { name: "StudioNSF", value: 20, max: 20 }, { name: "Bd1NSF", value: 42, max: 42 }, { name: "Bd2NSF", value: 38, max: 38 }, { name: "Bd3NSF", value: 0, max: 100 } ] },
  { title: "Define EUI per zone type (kBTU/ft2):", inset: "deep", fields: [
    { name: "Residential", value: 89, max: 890 }, { name: "Office", value: 180, max: 947 }, { name: "Greenspace", value: -35, min: -50, max: 93 } ] },
  { title: "Define Rental Prices ($/SF):", inset: "mid", fields: [
    { name: "Studio_Price", value: 5.79, max: 24 }, { name: "BD1_Price", value: 5.04, max: 23 }, { name: "BD2_Price", value: 3.92, max: 23 },
    { name: "BD3_Price", value: 4.06, max: 23 }, { name: "Office_Price", value: 6.53, max: 24 } ] },
  { title: "Define Transition Cost ($/SF):", inset: "mid", fields: [
    { name: "Residential", value: 80, max: 284 }, { name: "Greenspace", value: 35, max: 271 } ] },
];

const sq = (x: number, y: number) => svg`<rect x=${x} y=${y} width="20" height="20"></rect>`;
const BUILDINGS = html`<svg class="icon buildings" viewBox="0 0 166 170" aria-hidden="true">
  <path fill="#fff" d="M0 0H82V170H0ZM86 52H166V170H86Z"></path>
  <g fill="none" stroke="#2a2a2a" stroke-width="4">
    ${[13, 42, 71, 100].map((y) => [sq(14, y), sq(47, y)])}
    ${[64, 93, 122].map((y) => [sq(99, y), sq(132, y)])}
    <path d="M26 170V150Q26 136 40 136Q55 136 55 150V170"></path>
  </g></svg>`;
const BOX = html`<svg class="icon box" viewBox="0 0 75 53" aria-hidden="true"><path fill="#fff"
  d="M35 0L3 15L24 25L29 25L35 21ZM39 0L72 15L51 25L46 25L39 21ZM0 17L23 27L30 27L36 31V53L0 38ZM75 17L52 27L45 27L39 31V53L75 38Z"></path></svg>`;
const BOLT = html`<svg class="icon bolt" viewBox="0 0 39 58" aria-hidden="true"><path fill="#fff" stroke="#fff" stroke-width="2" stroke-linejoin="round"
  d="M34 1L35 3L25 23L37 26V29L6 57L3 55L13 33L1 31V27L31 2Z"></path></svg>`;
const coin = (cls: string) => html`<svg class="icon ${cls}" viewBox="0 0 52 52" aria-hidden="true"><g fill="none" stroke="#fff" stroke-width="2">
  <circle cx="26" cy="26" r="24"></circle>
  <path stroke-width="3" d="M35 18C34 13 31 11 26 11C20 11 17 14 17 18C17 23 21 25 26 26C31 27 36 29 36 34C36 38 32 41 26 41C20 41 17 38 16 33M26 7V46"></path></g></svg>`;
const CRANE = html`<svg class="icon crane" viewBox="0 0 150 152" aria-hidden="true"><g fill="none" stroke="#fff" stroke-width="5">
  <path d="M2 8H148V21H2ZM16 8V21M62 8V21M74 8V21M86 8V21M98 8V21M110 8V21M122 8V21M134 8V21"></path>
  <path fill="#292929" d="M27 3H48V26H27Z"></path>
  <path d="M30 26V136M46 26V136M30 38H46M30 51H46M30 64H46M30 77H46M30 90H46M30 103H46M30 116H46M30 129H46"></path>
  <path d="M20 138H56L61 149H15ZM84 123H134V136H84ZM80 138H138V149H80Z"></path>
  <path stroke-width="4" d="M138 22V72M130 80Q132 90 139 88Q147 84 143 76L134 72"></path></g></svg>`;

@customElement("app-root")
class AppRoot extends LitElement {
  static styles = css`
    :host { display: block; box-sizing: border-box; min-height: 100vh; padding: 69px 75px 40px 78px; background: #202020; color: #fff; font-family: Roboto, "Liberation Sans", sans-serif; }
    h1, h2, h3, p, ul { margin: 0; padding: 0; font-weight: 300; }
    h1 { font-size: 30px; line-height: 40px; }
    h2 { font-size: 26px; line-height: 40px; white-space: nowrap; }
    .columns { display: grid; grid-template-columns: 3fr 10fr; column-gap: 111px; align-items: start; margin-top: 30px; }
    .columns > * { min-width: 0; }
    .top { display: flex; height: 164px; justify-content: space-between; align-items: flex-start; }
    .top h2 { padding-top: 80px; }

    .panel { background: #464646; border: 3px dashed #fff; }
    .pick { display: grid; grid-template-columns: 150fr 382fr; column-gap: 15px; align-items: center; padding: 7px 18px 0 0; font-size: 24px; }
    .pick label { text-align: right; color: #dcdcdc; }
    .drop { display: grid; align-items: center; }
    .drop > * { grid-area: 1 / 1; }
    .drop svg { justify-self: end; width: 20px; height: 12px; margin-right: 8px; pointer-events: none; }
    select { appearance: none; width: 100%; height: 50px; padding: 0 14px; border: 2px solid #6c6c6c; border-radius: 0; background: #4a4a4a; color: #8f8f8f; font: 500 22px Roboto, "Liberation Sans", sans-serif; }
    .focus { margin: 4px -5px 0; border: 7px solid #d5353b; }
    .checks { display: grid; gap: 23px; padding: 9px 8px 23px; list-style: none; }
    .checks label { display: flex; align-items: center; gap: 16px; height: 34px; font-size: 24px; color: #d6d6d6; }
    .checks input { appearance: none; display: grid; width: 21px; height: 21px; margin: 0 0 8px; border-radius: 3px; background: #bababa; }
    .checks input:checked::before { content: ""; background: #f4f4f4; clip-path: polygon(15% 52%, 27% 42%, 42% 58%, 78% 18%, 90% 30%, 43% 80%); }

    .heading { margin-top: 36px; }
    .heading h2 { line-height: 20px; }
    .cards { display: grid; grid-template-columns: 476fr 242fr 388fr 341fr; padding-left: 24%; height: 138px; align-items: start; }
    .card { display: flex; align-items: flex-start; font-family: "EB Garamond", "Liberation Serif", serif; }
    .card h3 { font-size: 30px; line-height: 32px; font-weight: 400; white-space: nowrap; }
    .card ul { list-style: none; font-size: 19px; line-height: 24px; padding-left: 26px; }
    .card li { display: flex; gap: 32px; white-space: nowrap; }
    .card sup { font-size: 12px; line-height: 0; }
    .tint { background: #292929; }
    .icon { flex: none; display: block; }
    .building { box-sizing: border-box; width: 378px; height: 122px; padding: 3px 15px 0 74px; justify-content: space-between; }
    .building h3 { line-height: 36px; }
    .building ul { line-height: 26px; padding-left: 30px; padding-top: 4px; }
    .building > div { width: 0; }
    .buildings { width: 55px; height: 57px; margin-top: 53px; }
    .room, .energy { padding-top: 26px; }
    .room h3, .energy h3 { font-size: 28px; }
    .room ul { padding-top: 3px; font-size: 17px; }
    .energy ul { padding-top: 2px; }
    .room .box { width: 75px; height: 53px; margin: 34px 0 0 7px; }
    .energy .bolt { width: 39px; height: 58px; margin: 35px 0 0 20px; }
    .rental { margin-right: 64px; align-items: stretch; }
    .rental > div { flex: 260; height: 95px; padding: 27px 0 0 42px; }
    .rental > span { flex: 64; height: 87px; margin-top: 13px; padding: 43px 0 0 2px; }
    .coin { width: 54px; height: 54px; margin-top: -2px; }
    .transition { height: 94px; margin-top: 5px; padding: 23px 10px 6px 74px; justify-content: space-between; }
    .transition > div { width: 0; }
    .transition > span { display: grid; justify-items: end; gap: 8px; margin-top: -21px; }
    .small { width: 33px; height: 33px; margin-right: 3px; }
    .crane { width: 50px; height: 51px; }

    .global { display: grid; grid-template-columns: repeat(5, minmax(0, 1fr)); padding: 0 18px 4px 10px; border-width: 4px; }
    .rows { display: grid; gap: 15px; }
    .legend, .rest { font: 16px/21px "DejaVu Sans Mono", "Liberation Mono", monospace; color: #c9c9c9; white-space: nowrap; }
    .legend { padding: 0 0 7px 8px; text-decoration: underline; text-underline-offset: 3px; }
    .mid .legend { padding-left: 27px; }
    .deep .legend { padding-left: 39px; }
    .rest { display: flex; gap: 38px; padding-left: 86px; margin-top: -7px; }
  `;

  private list(title: string, items: unknown[]) {
    return html`<div><h3>${title}</h3><ul>${items.map((t) => html`<li><span>-</span><span>${t}</span></li>`)}</ul></div>`;
  }

  render() {
    return html`
      <h1>User Interface and Widgets</h1>
      <main class="columns">
        <section>
          <div class="top"><h2>01 Run Analysis Widget - Set Conversion Rate</h2></div>
          <form class="panel">
            <div class="pick">
              <label for="bldg">BldgID</label>
              <div class="drop">
                <select id="bldg"><option>All Selected</option></select>
                <svg viewBox="0 0 20 12" aria-hidden="true"><path d="M1 2L10 10L19 2" fill="none" stroke="#2e2e2e" stroke-width="3"></path></svg>
              </div>
            </div>
            <div class="focus"><slider-row large .field=${{ name: "ResPerc", value: 54, max: 100 }}></slider-row></div>
            <ul class="checks">
              ${ANALYSIS.map(([name, on]) => html`<li><label><input type="checkbox" ?checked=${on} />${name}</label></li>`)}
            </ul>
          </form>
        </section>
        <section>
          <div class="top">
            <h2>02 Load Target Building Map (Types: Office / R&amp;D)</h2>
            <div class="card tint building">
              ${this.list("Building information", ["Building type", "Built year", html`Building NSF (ft<sup>2</sup>)`])}
              ${BUILDINGS}
            </div>
          </div>
          <district-map></district-map>
          <div class="heading"><h2>03 Run Global Widget (Default Value Set to Cambridge Average)</h2></div>
          <div class="cards">
            <div class="card room">${this.list("Room information", ["Room Size", html`Room NSF (ft<sup>2</sup>)`])}${BOX}</div>
            <div class="card energy">${this.list("Energy", ["Site EUI"])}${BOLT}</div>
            <div class="card rental">
              <div class="tint">${this.list("Rental price", ["Apartment/Condo", "Office"])}</div>
              <span class="tint">${coin("coin")}</span>
            </div>
            <div class="card tint transition">
              ${this.list("Transition cost", ["Residential $/sf", "Green space $/sf"])}
              <span>${coin("small")}${CRANE}</span>
            </div>
          </div>
          <form class="panel global">
            ${GROUPS.map((g) => html`<section class=${g.inset}>
              <h3 class="legend">${g.title}</h3>
              <div class="rows">
                ${g.fields.map((f) => html`<slider-row .field=${f}></slider-row>`)}
                ${g.remaining === undefined ? "" : html`<p class="rest"><span>Remaining alottment:</span><span>${g.remaining}</span></p>`}
              </div>
            </section>`)}
          </form>
        </section>
      </main>`;
  }
}
